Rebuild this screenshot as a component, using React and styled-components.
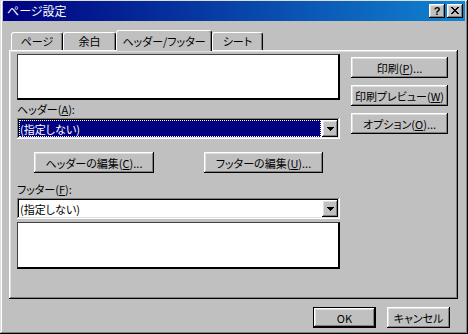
import React from 'react';
import styled, { createGlobalStyle, css } from 'styled-components';

const Global = createGlobalStyle`
  html, body { margin: 0; padding: 0; background: #c0c0c0; }
  body {
    font-family: "Noto Sans CJK JP", "Noto Sans", sans-serif;
    font-size: 11px;
    color: #000;
  }
  * { box-sizing: border-box; }
`;

const raised = css`
  box-shadow: inset -1px -1px #000, inset 1px 1px #fff, inset -2px -2px #808080, inset 2px 2px #dfdfdf;
`;

const Window = styled.div`
  width: 468px;
  height: 334px;
  background: #c0c0c0;
  display: flex;
  flex-direction: column;
  padding: 1px 3px 3px 3px;
  box-shadow: inset -1px -1px #000, inset 1px 1px #dfdfdf, inset -2px -2px #808080, inset 2px 2px #fff;
  font-feature-settings: "palt";
`;

const TitleBar = styled.div`
  height: 20px;
  display: flex;
  align-items: center;
  padding: 0 2px 0 2px;
  background: linear-gradient(90deg, #000080 0%, #1084d0 100%);
`;

const TitleText = styled.span`
  color: #fff;
  font-size: 12px;
  margin-left: 2px;
  line-height: 20px;
`;

const CaptionButtons = styled.div`
  margin-left: auto;
  display: flex;
  gap: 2px;
`;

const CaptionButton = styled.div`
  width: 16px;
  height: 14px;
  background: #c0c0c0;
  ${raised};
  display: flex;
  align-items: center;
  justify-content: center;
  font-family: "Liberation Sans", Arial, sans-serif;
  font-weight: bold;
  font-size: 11px;
  line-height: 14px;
  padding-bottom: 1px;
`;

const Body = styled.div`
  flex: 1;
  display: flex;
  flex-direction: column;
  padding: 9px 7px 0 6px;
`;

const TabStrip = styled.div`
  display: flex;
  align-items: flex-end;
  height: 21px;
  margin-bottom: -1px;
  padding-left: 2px;
  position: relative;
  z-index: 1;
`;

const Tab = styled.div`
  width: ${p => p.$w}px;
  height: ${p => (p.$active ? 21 : 18)}px;
  margin-bottom: ${p => (p.$active ? 0 : 1)}px;
  background: #c0c0c0;
  border-top: 1px solid #fff;
  border-left: 1px solid #fff;
  border-right: 1px solid #000;
  border-top-left-radius: 3px;
  border-top-right-radius: 3px;
  box-shadow: inset -1px 0 #808080;
  display: flex;
  justify-content: center;
  padding-top: ${p => (p.$active ? 3 : 1)}px;
  line-height: 14px;
  white-space: nowrap;
`;

const Panel = styled.div`
  height: 249px;
  background: #c0c0c0;
  ${raised};
  padding: 4px 0 0 8px;
  display: grid;
  grid-template-columns: 323px 97px;
  column-gap: 11px;
  align-items: start;
`;

const LeftCol = styled.div`
  display: flex;
  flex-direction: column;
`;

const RightCol = styled.div`
  display: flex;
  flex-direction: column;
  gap: 7px;
  padding-top: 3px;
`;

const Preview = styled.div`
  height: ${p => p.$h}px;
  margin-top: ${p => p.$mt || 0}px;
  background: #fff;
  border-top: 1px solid #404040;
  border-left: 1px solid #404040;
  border-right: 2px solid #000;
  border-bottom: 2px solid #000;
`;

const Label = styled.div`
  height: ${p => p.$h}px;
  display: flex;
  align-items: flex-end;
  line-height: 18px;
  white-space: nowrap;
`;

const Combo = styled.div`
  height: 21px;
  background: #fff;
  display: flex;
  padding: 2px;
  box-shadow: inset -1px -1px #fff, inset 1px 1px #808080, inset -2px -2px #dfdfdf, inset 2px 2px #000;
`;

const ComboValue = styled.div`
  flex: 1;
  display: flex;
  align-items: center;
  padding-left: 1px;
  margin-right: 1px;
  white-space: nowrap;
  ${p => p.$selected && css`
    background: #000080;
    color: #fff;
    outline: 1px dotted #fff;
    outline-offset: -1px;
  `}
`;

const DropButton = styled.div`
  width: 16px;
  background: #c0c0c0;
  ${raised};
  display: flex;
  align-items: center;
  justify-content: center;
`;

const EditRow = styled.div`
  display: flex;
  gap: 50px;
  padding-left: 17px;
  margin-top: 13px;
`;

const Button = styled.button`
  width: ${p => p.$w}px;
  height: 21px;
  padding: 0;
  margin: 0;
  border: none;
  background: #c0c0c0;
  font: inherit;
  color: #000;
  white-space: nowrap;
  ${p => p.$default
    ? css`box-shadow: inset -2px -2px #000, inset 1px 1px #000, inset 2px 2px #fff, inset -3px -3px #808080, inset 3px 3px #dfdfdf;`
    : raised}
`;

const Footer = styled.div`
  display: flex;
  justify-content: flex-end;
  gap: 11px;
  margin-top: 8px;
  padding-right: 8px;
`;

const Arrow = () => (
  <svg width="7" height="4" viewBox="0 0 7 4">
    <path d="M0 0h7v1H0zM1 1h5v1H1zM2 2h3v1H2zM3 3h1v1H3z" fill="#000" />
  </svg>
);

const CloseIcon = () => (
  <svg width="8" height="7" viewBox="0 0 8 7" shapeRendering="crispEdges">
    <path
      d="M0 0h2v1H0zM6 0h2v1H6zM1 1h2v1H1zM5 1h2v1H5zM2 2h4v1H2zM3 3h2v1H3zM2 4h4v1H2zM1 5h2v1H1zM5 5h2v1H5zM0 6h2v1H0zM6 6h2v1H6z"
      fill="#000"
    />
  </svg>
);

const ComboBox = ({ value, selected }) => (
  <Combo>
    <ComboValue $selected={selected}>{value}</ComboValue>
    <DropButton><Arrow /></DropButton>
  </Combo>
);

const tabs = [
  { label: 'ページ', w: 52 },
  { label: '余白', w: 53 },
  { label: 'ヘッダー/フッター', w: 96, active: true },
  { label: 'シート', w: 51 },
];

export default function App() {
  return (
    <>
      <Global />
      <Window>
        <TitleBar>
          <TitleText>ページ設定</TitleText>
          <CaptionButtons>
            <CaptionButton>?</CaptionButton>
            <CaptionButton><CloseIcon /></CaptionButton>
          </CaptionButtons>
        </TitleBar>
        <Body>
          <TabStrip>
            {tabs.map(t => (
              <Tab key={t.label} $w={t.w} $active={t.active}>{t.label}</Tab>
            ))}
          </TabStrip>
          <Panel>
            <LeftCol>
              <Preview $h={46} />
              <Label $h={18}><span>ヘッダー(<u>A</u>):</span></Label>
              <ComboBox value="(指定しない)" selected />
              <EditRow>
                <Button $w={120}>ヘッダーの編集(<u>C</u>)...</Button>
                <Button $w={119}>フッターの編集(<u>U</u>)...</Button>
              </EditRow>
              <Label $h={25}><span>フッター(<u>F</u>):</span></Label>
              <ComboBox value="(指定しない)" />
              <Preview $h={47} $mt={3} />
            </LeftCol>
            <RightCol>
              <Button $w={97}>印刷(<u>P</u>)...</Button>
              <Button $w={97}>印刷プレビュー(<u>W</u>)</Button>
              <Button $w={97}>オプション(<u>O</u>)...</Button>
            </RightCol>
          </Panel>
          <Footer>
            <Button $w={63} $default>OK</Button>
            <Button $w={63}>キャンセル</Button>
          </Footer>
        </Body>
      </Window>
    </>
  );
}
